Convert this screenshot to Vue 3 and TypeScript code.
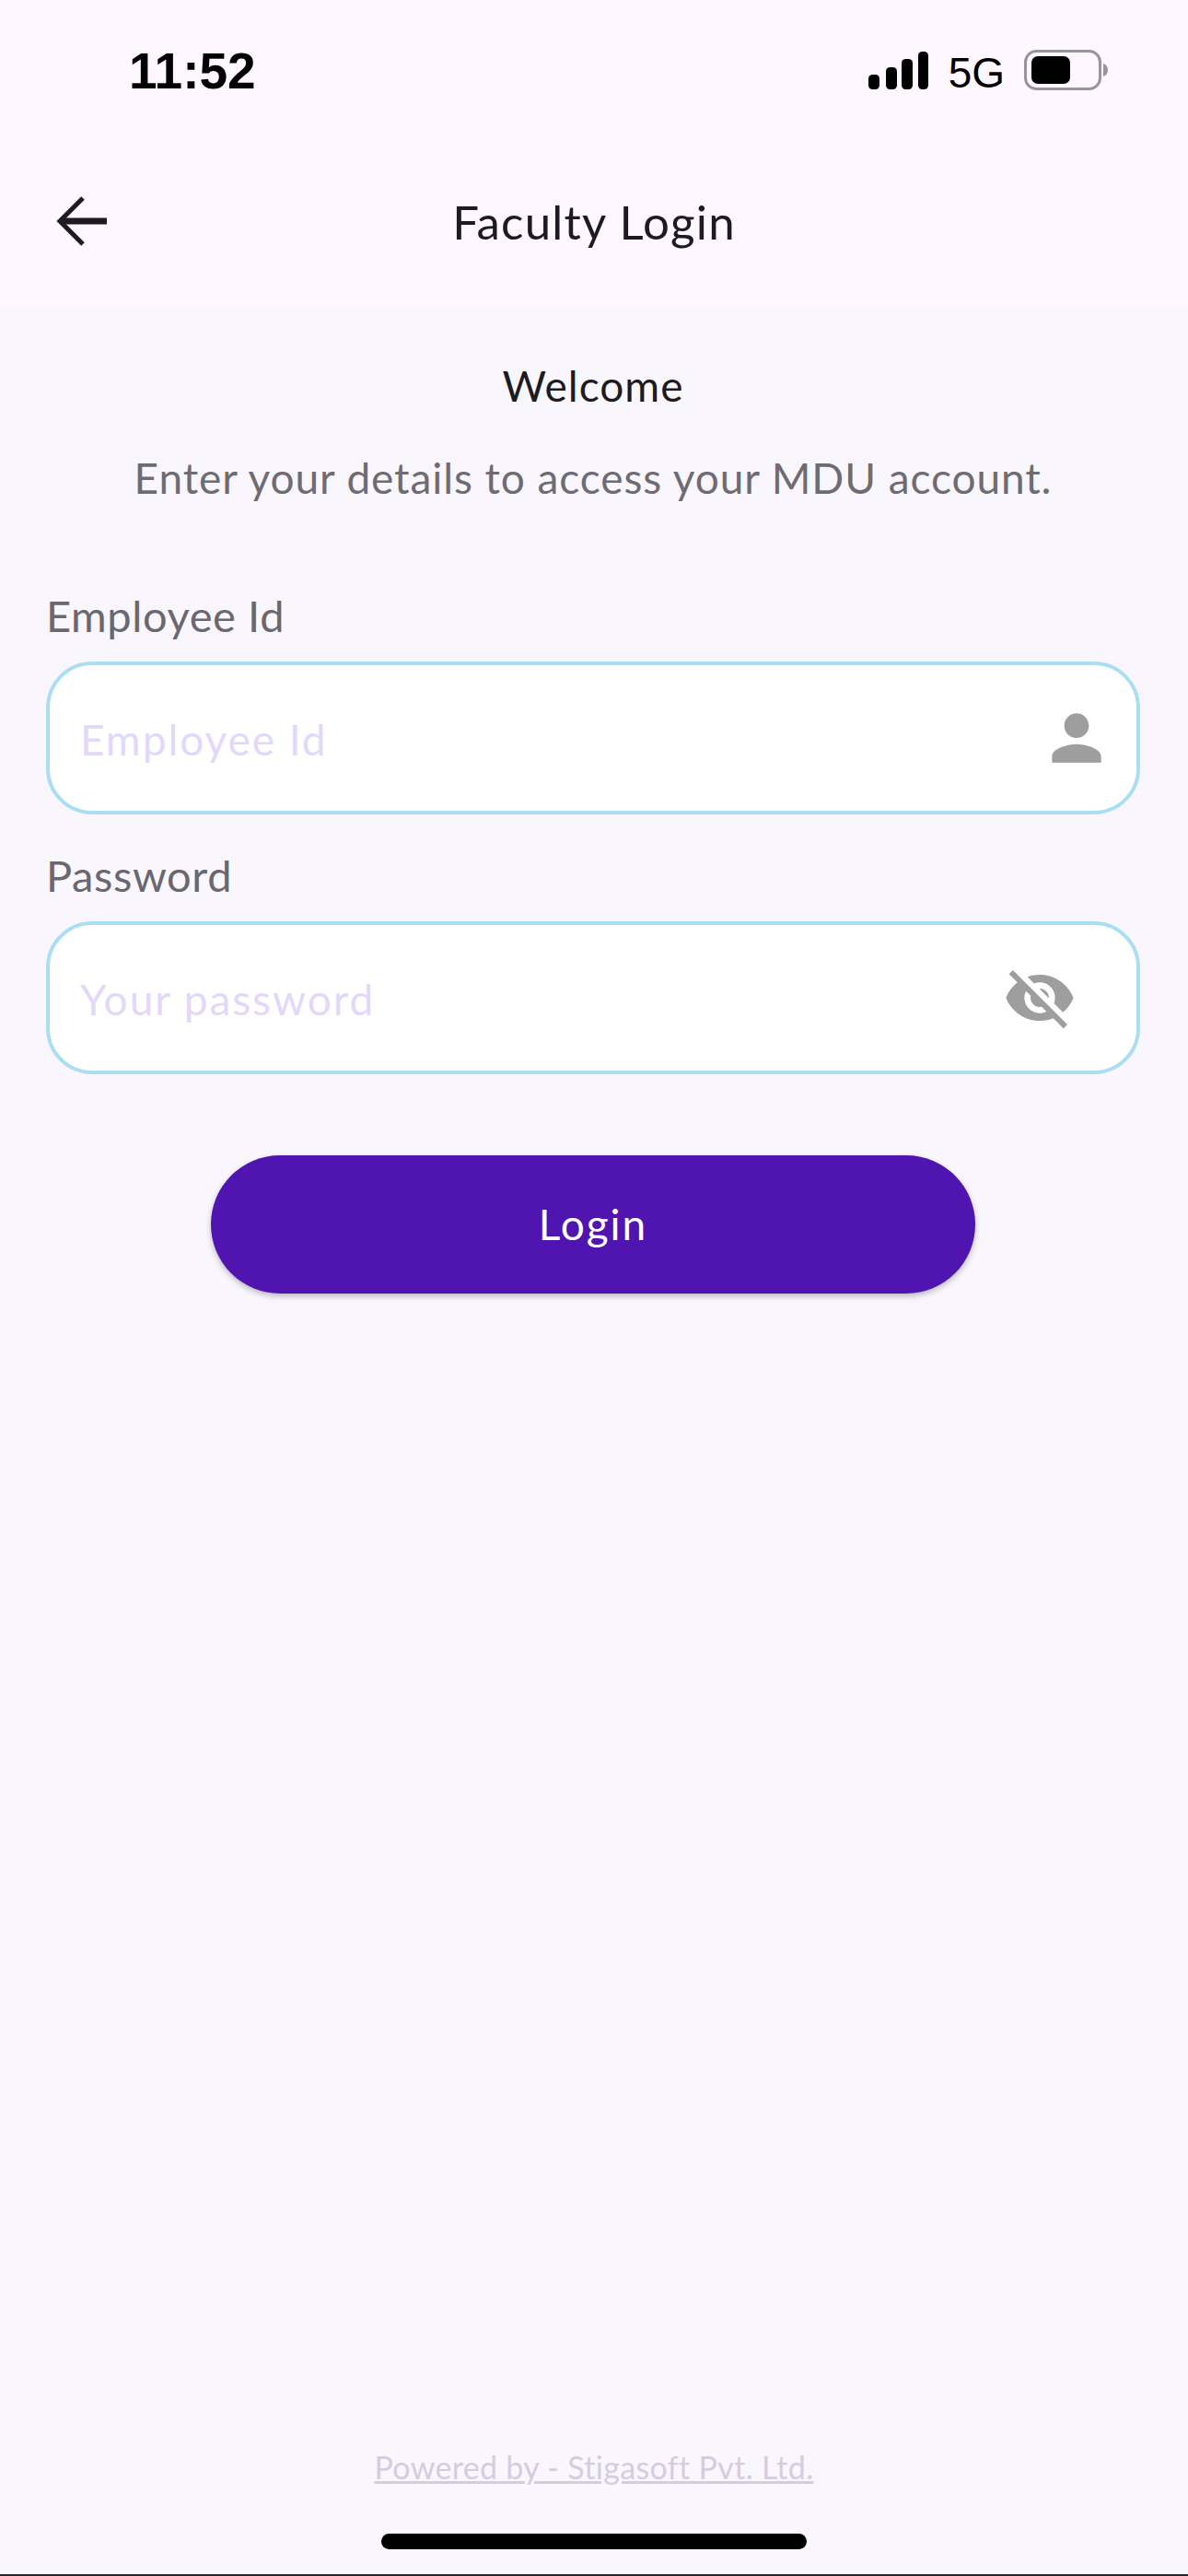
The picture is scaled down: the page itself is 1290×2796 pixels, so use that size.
<script setup lang="ts">
type Field = {
  label: string;
  placeholder: string;
  icon: "person" | "eye";
};

const fields: Field[] = [
  { label: "Employee Id", placeholder: "Employee Id", icon: "person" },
  { label: "Password", placeholder: "Your password", icon: "eye" },
];
</script>

<template>
  <div class="screen">
    <header class="top">
      <div class="status">
        <span class="clock">11:52</span>
        <div class="status-right">
          <svg class="signal" width="65" height="41" viewBox="0 0 65 41">
            <rect x="0" y="25" width="12" height="16" rx="4.5" />
            <rect x="19" y="17" width="12" height="24" rx="4.5" />
            <rect x="36" y="8" width="12" height="33" rx="4.5" />
            <rect x="54" y="0" width="11" height="41" rx="4.5" />
          </svg>
          <span class="net">5G</span>
          <svg class="battery" width="92" height="44" viewBox="0 0 92 44">
            <rect x="1.5" y="1.5" width="81" height="41" rx="12" fill="none" stroke="#98959a" stroke-width="3" />
            <rect x="8" y="7" width="42" height="30" rx="7" fill="#000" />
            <path d="M86 15c3 1 5 3.500 5 7s-2 6-5 7z" fill="#98959a" />
          </svg>
        </div>
      </div>
      <div class="appbar">
        <svg class="back" width="58" height="56" viewBox="0 0 58 56">
          <path d="M29 3 4 28l25 25" fill="none" stroke="#1d1b20" stroke-width="5" />
          <path d="M6 28h49" fill="none" stroke="#1d1b20" stroke-width="7" />
        </svg>
        <h1 class="title">Faculty Login</h1>
      </div>
    </header>

    <main class="content">
      <p class="welcome">Welcome</p>
      <p class="intro">Enter your details to access your MDU account.</p>

      <div class="fields">
        <div v-for="field in fields" :key="field.label" class="field">
          <label class="label">{{ field.label }}</label>
          <div class="box">
            <span class="placeholder">{{ field.placeholder }}</span>
            <svg v-if="field.icon === 'person'" class="icon" width="80" height="80" viewBox="0 0 24 24">
              <path d="M12 12c2.210 0 4-1.790 4-4s-1.790-4-4-4-4 1.790-4 4 1.790 4 4 4zm0 2c-2.670 0-8 1.340-8 4v2h16v-2c0-2.660-5.330-4-8-4z" />
            </svg>
            <svg v-else class="icon icon-eye" width="80" height="80" viewBox="0 0 24 24">
              <path d="M12 7c2.760 0 5 2.240 5 5 0 .65-.13 1.260-.36 1.830l2.920 2.920c1.510-1.260 2.700-2.890 3.430-4.750-1.730-4.390-6-7.500-11-7.500-1.400 0-2.740.25-3.980.7l2.160 2.160C10.740 7.130 11.350 7 12 7zM2 4.270l2.280 2.280.46.46C3.080 8.300 1.780 10.020 1 12c1.730 4.390 6 7.500 11 7.500 1.550 0 3.030-.3 4.380-.84l.42.42L19.730 22 21 20.730 3.270 3 2 4.270zM7.530 9.800l1.550 1.550c-.05.21-.08.43-.08.65 0 1.660 1.340 3 3 3 .22 0 .44-.03.65-.08l1.550 1.550c-.67.33-1.410.53-2.200.53-2.760 0-5-2.240-5-5 0-.79.2-1.530.53-2.200zm4.310-.78l3.150 3.150.02-.16c0-1.660-1.340-3-3-3l-.17.01z" />
            </svg>
          </div>
        </div>
      </div>

      <button class="login" type="button">Login</button>
    </main>

    <footer class="foot">
      <a class="powered">Powered by - Stigasoft Pvt. Ltd.</a>
      <div class="home-bar"></div>
    </footer>
  </div>
</template>

<style scoped>
.screen {
  display: flex;
  flex-direction: column;
  height: 2796px;
  overflow: hidden;
  background: #f9f6fe;
  border-bottom: 2px solid #23252a;
  box-sizing: border-box;
  font-family: Lato, "Liberation Sans", sans-serif;
}

.top {
  height: 333px;
  flex: none;
  background: #fef7ff;
}

.status {
  display: flex;
  justify-content: space-between;
  align-items: flex-start;
  padding: 45px 86px 0 140px;
}

.clock {
  font-family: "Liberation Sans", Arial, sans-serif;
  font-size: 55px;
  line-height: 64px;
  font-weight: 700;
  color: #000;
}

.status-right {
  display: flex;
  align-items: flex-start;
  padding-top: 11px;
}

.signal {
  margin-right: 22px;
  fill: #000;
}

.net {
  margin-right: 21px;
  font-family: "Liberation Sans", Arial, sans-serif;
  font-size: 46px;
  line-height: 46px;
  color: #000;
}

.battery {
  margin-top: -2px;
}

.appbar {
  position: relative;
  display: flex;
  align-items: center;
  justify-content: center;
  height: 112px;
  margin-top: 76px;
}

.back {
  position: absolute;
  left: 61px;
  top: 27px;
}

.title {
  margin: 0;
  font-size: 51px;
  line-height: 62px;
  font-weight: 400;
  letter-spacing: 1.2px;
  color: #1d1b20;
}

.content {
  display: flex;
  flex-direction: column;
  align-items: center;
  padding: 0 52px 0 50px;
}

.welcome {
  margin: 62px 0 0;
  font-size: 46px;
  line-height: 48px;
  letter-spacing: 1px;
  color: #1d1b20;
}

.intro {
  margin: 48px 0 0;
  font-size: 46px;
  line-height: 56px;
  letter-spacing: 0.92px;
  color: #6e6c72;
}

.fields {
  align-self: stretch;
  display: flex;
  flex-direction: column;
  gap: 38px;
  margin-top: 93px;
}

.label {
  display: block;
  margin-bottom: 22px;
  font-size: 47px;
  line-height: 56px;
  letter-spacing: 0.6px;
  color: #6a676e;
}

.box {
  display: flex;
  align-items: center;
  justify-content: space-between;
  height: 166px;
  box-sizing: border-box;
  padding: 2px 25px 0 33px;
  border: 4px solid #aadff3;
  border-radius: 50px;
  background: #fff;
}

.placeholder {
  font-size: 46px;
  letter-spacing: 1.95px;
  color: #e4d8fa;
}

.icon {
  fill: #9e9e9e;
  margin-top: -2px;
}

.icon-eye {
  margin-right: 40px;
}

.login {
  width: 830px;
  height: 150px;
  margin-top: 88px;
  padding: 0 0 2px;
  border: none;
  border-radius: 75px;
  background: #5015b0;
  box-shadow: 0 3px 6px rgba(0, 0, 0, 0.25);
  color: #fff;
  font-family: inherit;
  font-size: 46px;
  letter-spacing: 2px;
}

.foot {
  display: flex;
  flex-direction: column;
  align-items: center;
  margin-top: auto;
  padding-bottom: 27px;
}

.powered {
  font-size: 34px;
  line-height: 40px;
  letter-spacing: 0.32px;
  color: #d6cce1;
  text-decoration: underline;
}

.home-bar {
  width: 462px;
  height: 17px;
  margin-top: 52px;
  border-radius: 9px;
  background: #000;
}
</style>

<style>
body {
  margin: 0;
}
</style>
